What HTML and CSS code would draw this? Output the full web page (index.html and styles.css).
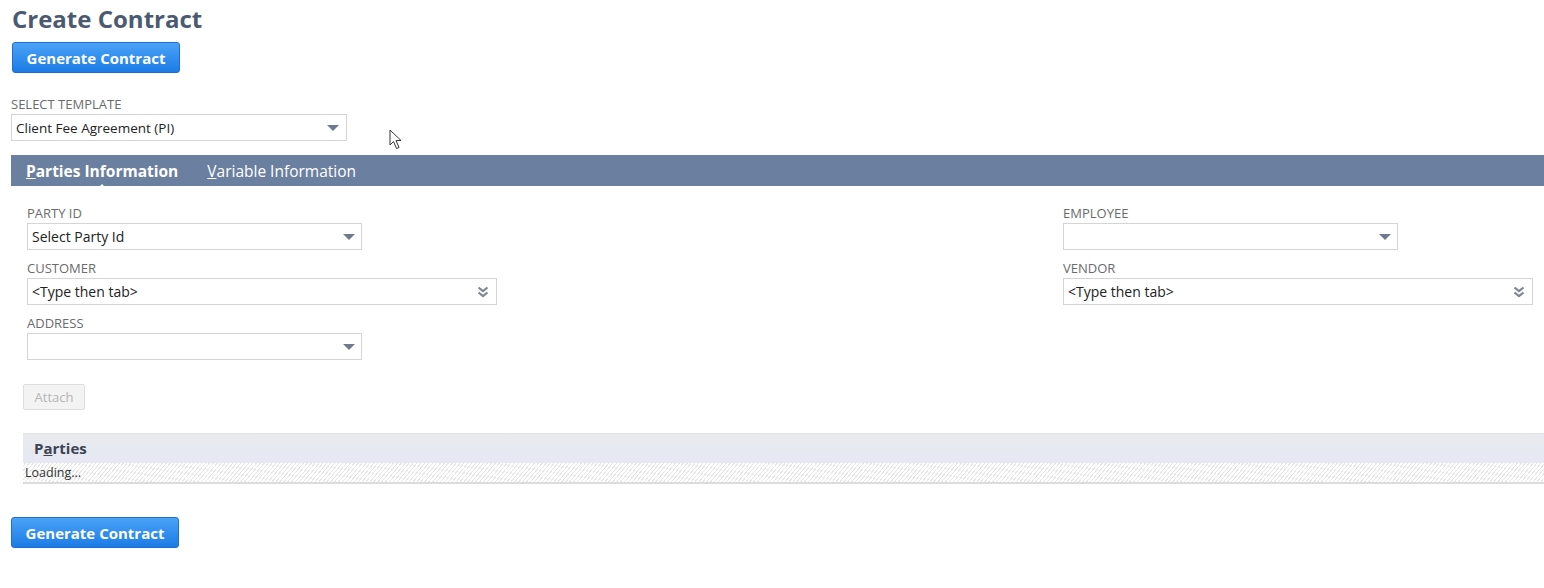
FILE: index.html
```html
<!DOCTYPE html>
<html lang="en">
<head>
    <title>Create Contract</title>
    <link rel="stylesheet" href="styles.css">
</head>
<body>
    <div class="page">
        <h1 class="title">Create Contract</h1>
        <button class="btn-primary" type="button">Generate Contract</button>

        <div class="template">
            <label class="field-label">Select Template</label>
            <div class="select select-template">
                <span>Client Fee Agreement (PI)</span>
                <span class="arrow"></span>
            </div>
        </div>
    </div>

    <div class="tabs">
        <span class="tab active"><u>P</u>arties Information</span>
        <span class="tab"><u>V</u>ariable Information</span>
    </div>

    <div class="tab-body">
        <div class="cols">
            <div class="col">
                <div class="field">
                    <label class="field-label">Party ID</label>
                    <div class="select select-short">
                        <span>Select Party Id</span>
                        <span class="arrow"></span>
                    </div>
                </div>
                <div class="field">
                    <label class="field-label">Customer</label>
                    <div class="select select-long">
                        <span>&lt;Type then tab&gt;</span>
                        <svg class="dbl" width="12" height="12" viewBox="0 0 12 12">
                            <path d="M1.5 1.5 L6 5 L10.5 1.5" fill="none" stroke="#7d8594" stroke-width="2.2"/>
                            <path d="M1.5 6.5 L6 10 L10.5 6.5" fill="none" stroke="#7d8594" stroke-width="2.2"/>
                        </svg>
                    </div>
                </div>
                <div class="field">
                    <label class="field-label">Address</label>
                    <div class="select select-short">
                        <span></span>
                        <span class="arrow"></span>
                    </div>
                </div>
            </div>
            <div class="col">
                <div class="field">
                    <label class="field-label">Employee</label>
                    <div class="select select-short">
                        <span></span>
                        <span class="arrow"></span>
                    </div>
                </div>
                <div class="field">
                    <label class="field-label">Vendor</label>
                    <div class="select select-long">
                        <span>&lt;Type then tab&gt;</span>
                        <svg class="dbl" width="12" height="12" viewBox="0 0 12 12">
                            <path d="M1.5 1.5 L6 5 L10.5 1.5" fill="none" stroke="#7d8594" stroke-width="2.2"/>
                            <path d="M1.5 6.5 L6 10 L10.5 6.5" fill="none" stroke="#7d8594" stroke-width="2.2"/>
                        </svg>
                    </div>
                </div>
            </div>
        </div>

        <button class="btn-attach" type="button" disabled>Attach</button>

        <div class="parties">
            <div class="parties-head">P<u>a</u>rties</div>
            <div class="parties-load">Loading...</div>
        </div>
    </div>

    <div class="page bottom">
        <button class="btn-primary" type="button">Generate Contract</button>
    </div>

    <svg class="cursor" width="14" height="22" viewBox="0 0 14 22">
        <path d="M1 1 L1 16 L4.5 12.5 L7.5 19.5 L10 18.5 L7 11.5 L12 11.5 Z" fill="#fff" stroke="#333" stroke-width="1"/>
    </svg>
</body>
</html>
```

FILE: styles.css
```css
*{
    box-sizing: border-box;
}
body{
    margin: 0;
    background: #fff;
    font-family: 'Open Sans', sans-serif;
    color: #333;
    position: relative;
}

.page{
    padding: 3px 0 0 12px;
}
.title{
    margin: 0;
    font-size: 24px;
    line-height: 31px;
    font-weight: 700;
    color: #4b5a71;
}
.btn-primary{
    display: block;
    margin-top: 8px;
    width: 168px;
    height: 31px;
    border: 1px solid #1f6fd0;
    border-radius: 3px;
    background: linear-gradient(#4aa3f7, #1c7be6);
    color: #fff;
    font-family: 'Open Sans', sans-serif;
    font-size: 15px;
    font-weight: 700;
    padding: 0;
}

.field-label{
    display: block;
    font-size: 13px;
    line-height: 16px;
    color: #6b6b6b;
    text-transform: uppercase;
    margin-bottom: 2px;
}
.template{
    margin-top: 23px;
    margin-left: -1px;
}
.select{
    display: flex;
    align-items: center;
    justify-content: space-between;
    height: 27px;
    border: 1px solid #d5d5d5;
    padding: 0 6px 0 4px;
    font-size: 14px;
    color: #222;
    background: #fff;
}
.select-template{
    width: 336px;
    font-size: 13.5px;
    padding-right: 7px;
}
.select-short{
    width: 335px;
}
.select-long{
    width: 470px;
    padding-right: 7px;
}
.arrow{
    width: 0;
    height: 0;
    border-left: 6px solid transparent;
    border-right: 6px solid transparent;
    border-top: 6px solid #6f7a8c;
}

.tabs{
    position: relative;
    margin: 14px 0 0 11px;
    height: 31px;
    background: #6b7fa0;
    display: flex;
    align-items: center;
    gap: 29px;
    padding-left: 15px;
}
.tab{
    color: #fff;
    font-size: 15.5px;
}
.tab.active{
    font-weight: 700;
    position: relative;
}
.tab.active::after{
    content: "";
    position: absolute;
    left: 50%;
    bottom: -8px;
    margin-left: -6px;
    border-left: 6px solid transparent;
    border-right: 6px solid transparent;
    border-bottom: 6px solid #fff;
}

.tab-body{
    padding: 19px 0 0 27px;
}
.cols{
    display: grid;
    grid-template-columns: 1036px 470px;
}
.field{
    margin-bottom: 10px;
}

.btn-attach{
    display: block;
    margin: 14px 0 0 -4px;
    width: 62px;
    height: 26px;
    border: 1px solid #ddd;
    border-radius: 2px;
    background: #f3f3f3;
    color: #b5b5b5;
    font-family: 'Open Sans', sans-serif;
    font-size: 13px;
    padding: 0;
}

.parties{
    margin: 23px 0 0 -4px;
    border-bottom: 2px solid #dcdcdc;
}
.parties-head{
    height: 30px;
    background: linear-gradient(#e9eaee, #e5e8f4);
    border-top: 1px solid #e3e3e3;
    padding-left: 11px;
    font-size: 15px;
    line-height: 29px;
    font-weight: 700;
    color: #3c4452;
}
.parties-load{
    height: 19px;
    padding-left: 2px;
    font-size: 12.5px;
    line-height: 19px;
    color: #333;
    background: repeating-linear-gradient(-50deg, #fff 0, #fff 2px, #e6e6e6 2px, #e6e6e6 3px);
}

.bottom{
    padding-top: 0;
}
.bottom .btn-primary{
    margin-top: 33px;
    margin-left: -1px;
}

.cursor{
    position: absolute;
    left: 389px;
    top: 129px;
}
```
